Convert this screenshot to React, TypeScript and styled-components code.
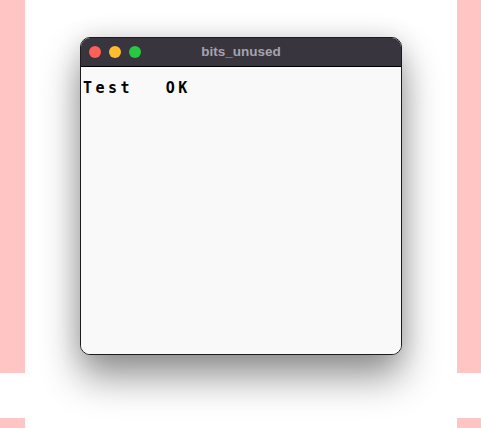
import React from "react";
import styled, { createGlobalStyle } from "styled-components";

const GlobalStyle = createGlobalStyle`
  html, body {
    margin: 0;
    padding: 0;
    background: #ffffff;
    overflow: hidden;
  }
  * { box-sizing: border-box; }
`;

const Page = styled.div`
  display: flex;
  width: 481px;
  height: 428px;
  background: #ffffff;
`;

const Rail = styled.div<{ $width: number }>`
  display: flex;
  flex-direction: column;
  gap: 45px;
  width: ${(p) => p.$width}px;
  flex: none;
`;

const RailBlock = styled.div<{ $height?: number }>`
  background: #ffc4c4;
  ${(p) => (p.$height ? `height: ${p.$height}px; flex: none;` : "flex: 1;")}
`;

const Stage = styled.div`
  flex: 1;
  display: flex;
  justify-content: center;
  align-items: flex-start;
  padding-top: 37px;
`;

const Window = styled.div`
  width: 322px;
  height: 318px;
  display: flex;
  flex-direction: column;
  border: 1px solid #1c1b1f;
  border-radius: 10px;
  overflow: hidden;
  background: #f9f9f9;
  box-shadow: 0 22px 38px rgba(0, 0, 0, 0.42), 0 0 26px rgba(0, 0, 0, 0.12);
`;

const TitleBar = styled.div`
  height: 29px;
  flex: none;
  display: grid;
  grid-template-columns: 1fr auto 1fr;
  align-items: center;
  padding: 0 8px;
  background: #38353f;
  border-bottom: 1px solid #000000;
`;

const Lights = styled.div`
  display: flex;
  gap: 8px;
  align-items: center;
`;

const Light = styled.span<{ $color: string }>`
  width: 12px;
  height: 12px;
  border-radius: 50%;
  background: ${(p) => p.$color};
`;

const Title = styled.div`
  font-family: "Liberation Sans", Arial, sans-serif;
  font-weight: 700;
  font-size: 13.5px;
  color: #a6a3ad;
  line-height: 16px;
  padding-bottom: 1px;
`;

const Content = styled.div`
  flex: 1;
  padding: 13px 2px 0;
  background: #f9f9f9;
`;

const PixelText = styled.div`
  font-family: "DejaVu Sans Mono", "Liberation Mono", monospace;
  font-weight: 700;
  font-size: 15px;
  line-height: 16px;
  letter-spacing: 3.5px;
  word-spacing: 20px;
  color: #000000;
  white-space: pre;
`;

export default function App() {
  return (
    <>
      <GlobalStyle />
      <Page>
        <Rail $width={25}>
          <RailBlock $height={373} />
          <RailBlock />
        </Rail>
        <Stage>
          <Window>
            <TitleBar>
              <Lights>
                <Light $color="#fe5f57" />
                <Light $color="#febc2e" />
                <Light $color="#28c840" />
              </Lights>
              <Title>bits_unused</Title>
              <span />
            </TitleBar>
            <Content>
              <PixelText>Test OK</PixelText>
            </Content>
          </Window>
        </Stage>
        <Rail $width={24}>
          <RailBlock $height={373} />
          <RailBlock />
        </Rail>
      </Page>
    </>
  );
}
